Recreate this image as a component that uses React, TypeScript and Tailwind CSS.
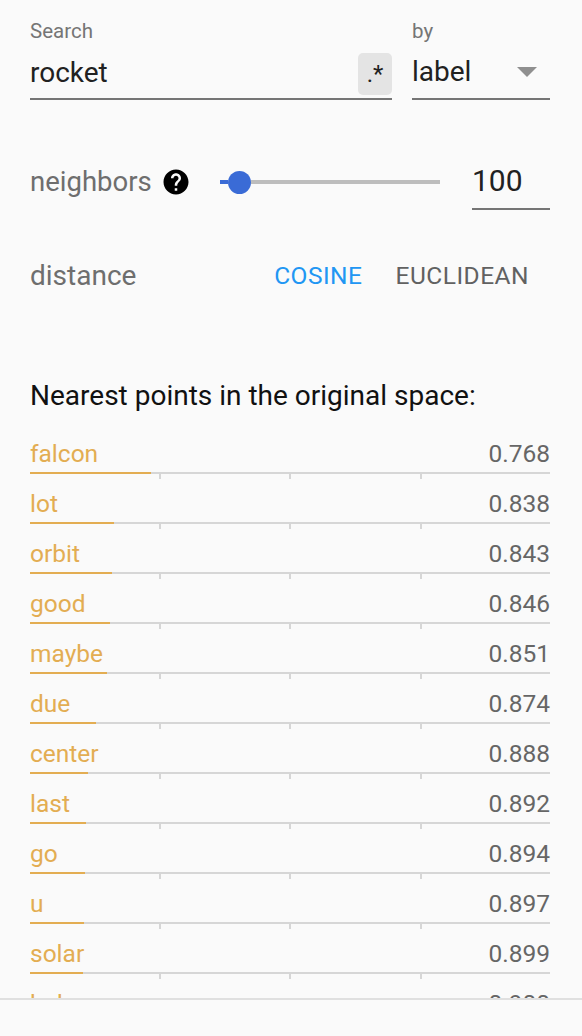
type Neighbor = {
  label: string
  distance: string
}

const neighbors: Neighbor[] = [
  { label: 'falcon', distance: '0.768' },
  { label: 'lot', distance: '0.838' },
  { label: 'orbit', distance: '0.843' },
  { label: 'good', distance: '0.846' },
  { label: 'maybe', distance: '0.851' },
  { label: 'due', distance: '0.874' },
  { label: 'center', distance: '0.888' },
  { label: 'last', distance: '0.892' },
  { label: 'go', distance: '0.894' },
  { label: 'u', distance: '0.897' },
  { label: 'solar', distance: '0.899' },
  { label: 'hub', distance: '0.900' },
]

function HelpIcon() {
  return (
    <svg viewBox="0 0 24 24" className="size-[30px] shrink-0" fill="#000">
      <path d="M12 2C6.48 2 2 6.48 2 12s4.48 10 10 10 10-4.48 10-10S17.52 2 12 2zm1 17h-2v-2h2v2zm2.07-7.75l-.9.92C13.45 12.9 13 13.5 13 15h-2v-.5c0-1.1.45-2.1 1.17-2.83l1.24-1.26c.37-.36.59-.86.59-1.41 0-1.1-.9-2-2-2s-2 .9-2 2H8c0-2.21 1.79-4 4-4s4 1.79 4 4c0 .88-.36 1.68-.93 2.25z" />
    </svg>
  )
}

function NeighborRow({ label, distance }: Neighbor) {
  const barWidth = Math.round(520 * (1 - parseFloat(distance)))
  return (
    <div className="flex h-[50px] shrink-0 flex-col">
      <div className="flex h-[42px] items-center justify-between pt-[6px] text-[24.5px] leading-[28px]">
        <span className="text-[#e3ad52]">{label}</span>
        <span className="text-[#666666]">{distance}</span>
      </div>
      <div className="flex h-[2px]">
        <div className="h-full bg-[#e3ad52]" style={{ width: barWidth }} />
        <div className="h-full flex-1 bg-[#d6d6d6]" />
      </div>
      <div className="flex h-[6px]">
        <div className="flex-1" />
        <div className="h-[5px] flex-1 border-l-2 border-[#d6d6d6]" />
        <div className="h-[5px] flex-1 border-l-2 border-[#d6d6d6]" />
        <div className="h-[5px] flex-1 border-l-2 border-[#d6d6d6]" />
      </div>
    </div>
  )
}

export default function App() {
  return (
    <div className="flex h-[1036px] w-[582px] flex-col overflow-hidden bg-[#fafafa] font-['Roboto',sans-serif]">
      <div className="h-[998px] shrink-0 overflow-hidden pl-[30px] pr-[32px] pt-[17px]">
        <div className="flex gap-[20px]">
          <div className="flex-1">
            <p className="text-[20.5px] leading-[28px] text-[#757575]">Search</p>
            <div className="flex h-[55px] items-center justify-between border-b-2 border-[#757575]">
              <span className="mt-[3px] text-[28px] leading-none text-[#212121]">rocket</span>
              <span className="mt-[5px] grid h-[42px] w-[34px] place-items-center rounded-[5px] bg-[#e4e4e4] text-[24px] leading-none text-[#212121]">
                .*
              </span>
            </div>
          </div>
          <div className="w-[138px]">
            <p className="text-[20.5px] leading-[28px] text-[#757575]">by</p>
            <div className="flex h-[55px] items-center justify-between border-b-2 border-[#757575]">
              <span className="mt-[1px] text-[28px] leading-none text-[#212121]">label</span>
              <svg viewBox="0 0 20 10" className="mr-[13px] h-[10px] w-[20px]" fill="#8f8f8f">
                <path d="M0 0h20L10 10z" />
              </svg>
            </div>
          </div>
        </div>

        <div className="mt-[54px] flex items-center">
          <span className="text-[27.5px] leading-none text-[#6e6e6e]">neighbors</span>
          <span className="ml-[9px]">
            <HelpIcon />
          </span>
          <div className="ml-[29px] flex w-[220px] items-center">
            <div className="h-[4px] w-[8px] bg-[#3a6bd6]" />
            <div className="size-[23px] shrink-0 rounded-full bg-[#3a6bd6]" />
            <div className="h-[4px] flex-1 bg-[#bdbdbd]" />
          </div>
          <div className="ml-auto flex h-[56px] w-[78px] items-center border-b-2 border-[#757575]">
            <span className="text-[30px] leading-none text-[#212121]">100</span>
          </div>
        </div>

        <div className="mt-[38px] flex h-[56px] items-center">
          <span className="text-[28px] leading-none text-[#6e6e6e]">distance</span>
          <div className="ml-auto mr-[21px] flex gap-[33px] text-[24.5px] leading-none tracking-[0.02em]">
            <span className="-ml-[3px] text-[#2196f3]">COSINE</span>
            <span className="text-[#616161]">EUCLIDEAN</span>
          </div>
        </div>

        <p className="mt-[76px] text-[28px] leading-[32px] text-[#111111]">
          Nearest points in the original space:
        </p>

        <div className="mt-[18px] flex flex-col">
          {neighbors.map((n) => (
            <NeighborRow key={n.label} {...n} />
          ))}
        </div>
      </div>
      <div className="h-[2px] shrink-0 bg-[#e0e0e0]" />
    </div>
  )
}
